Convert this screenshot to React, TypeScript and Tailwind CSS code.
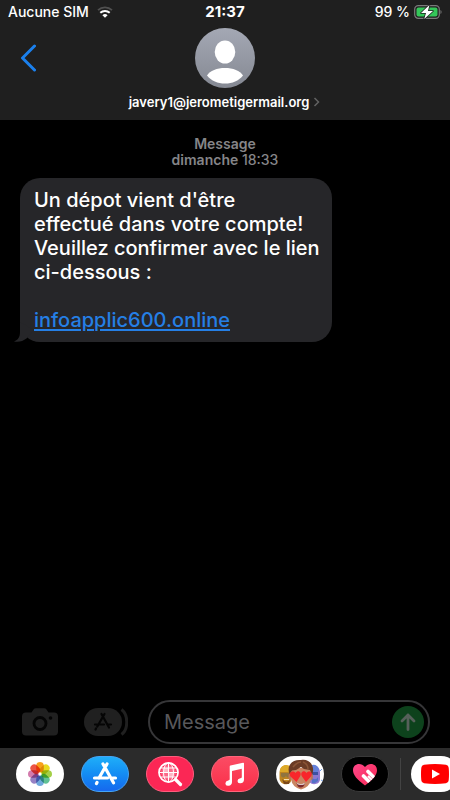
import type { ReactNode } from "react";

const WifiIcon = () => (
  <svg className="w-4 h-3" viewBox="0 0 16 12" fill="none" aria-hidden="true">
    <path d="M1 4.2a10.2 10.2 0 0 1 14 0" stroke="#505050" strokeWidth="1.8" />
    <path d="M3.3 6.7a7 7 0 0 1 9.4 0" stroke="#fff" strokeWidth="2" />
    <path d="M8 11.8 5.4 9.2a3.8 3.8 0 0 1 5.2 0Z" fill="#fff" />
  </svg>
);

const BatteryIcon = () => (
  <svg className="w-7 h-4" viewBox="0 0 28 16" fill="none" aria-hidden="true">
    <rect x="0.7" y="1.7" width="24.6" height="12.6" rx="3.6" stroke="#7b7b7b" strokeWidth="1.2" />
    <rect x="2.5" y="3.5" width="21" height="9" rx="2" fill="#34c759" />
    <path d="M26.5 6v4c1.4-.6 1.4-3.4 0-4Z" fill="#7b7b7b" />
    <path
      d="M15.4 1 7 9h5l-1.8 6L19 7h-5Z"
      fill="#fff"
      stroke="#1f1f1f"
      strokeWidth="1.6"
      paintOrder="stroke"
      strokeLinejoin="round"
    />
  </svg>
);

const Avatar = () => (
  <svg className="w-15 h-15" viewBox="0 0 60 60" aria-hidden="true">
    <defs>
      <linearGradient id="avatar" x1="0" y1="0" x2="0" y2="1">
        <stop offset="0" stopColor="#a4a8b4" />
        <stop offset="1" stopColor="#858993" />
      </linearGradient>
    </defs>
    <circle cx="30" cy="30" r="30" fill="url(#avatar)" />
    <ellipse cx="30" cy="24" rx="10.3" ry="11.5" fill="#fff" />
    <path d="M12 47.5C15 42.5 22 40 30 40s15 2.5 18 7.5C43.5 53 37.5 55.5 30 55.5S16.5 53 12 47.5Z" fill="#fff" />
  </svg>
);

const CameraIcon = () => (
  <svg className="w-9 h-7" viewBox="0 0 36 28" aria-hidden="true">
    <path
      d="M4 4.5h5.5l2-3Q12.3.3 14 .3h8q1.7 0 2.5 1.2l2 3H32q4 0 4 4v15q0 4-4 4H4q-4 0-4-4v-15q0-4 4-4Z"
      fill="#202020"
    />
    <circle cx="18" cy="15.5" r="6" fill="none" stroke="#050505" strokeWidth="2.8" />
    <circle cx="28.5" cy="10" r="1.8" fill="#050505" />
  </svg>
);

const StoreIcon = () => (
  <svg className="w-11 h-7" viewBox="0 0 44 28" fill="none" aria-hidden="true">
    <rect width="38" height="28" rx="14" fill="#202020" />
    <path d="M34.5 1c9 5 9 21 0 26" stroke="#000" strokeWidth="2.5" />
    <path d="M37.5 1.5c7 5 7 20 0 25" stroke="#202020" strokeWidth="3" />
    <path
      d="m20.5 6-7.2 12.5M17.5 6 25 19.500M11 16.500h9M24 16.500h3M12 20.500l-.5 1"
      stroke="#050505"
      strokeWidth="2.2"
      strokeLinecap="round"
    />
  </svg>
);

const petals = ["#f7a01b", "#e8d921", "#a3cf46", "#60c195", "#70a9dc", "#9681c4", "#d37bad", "#ed5545"];

const PhotosIcon = () => (
  <svg className="w-7 h-7" viewBox="-14 -14 28 28" aria-hidden="true">
    {petals.map((color, i) => (
      <rect
        key={color}
        className="mix-blend-multiply"
        x="-3.8"
        y="-12"
        width="7.6"
        height="10.5"
        rx="3.8"
        fill={color}
        transform={`rotate(${i * 45})`}
      />
    ))}
    <circle r="1.2" fill="#fff" />
  </svg>
);

const AppStoreIcon = () => (
  <svg className="w-7 h-7" viewBox="0 0 28 28" fill="none" stroke="#fff" strokeWidth="3.2" strokeLinecap="round" aria-hidden="true">
    <path d="M16 4 8 18M12 4l10.5 18.8M3.5 18h13M21.5 18h3M6 22.5l-.5 1" />
  </svg>
);

const ImageSearchIcon = () => (
  <svg className="w-7 h-7" viewBox="0 0 28 28" fill="none" stroke="#fff" aria-hidden="true">
    <circle cx="12.5" cy="12.5" r="9.5" strokeWidth="1.8" />
    <circle cx="12.5" cy="12.5" r="7.4" fill="#fff" fillOpacity=".3" stroke="none" />
    <path d="M8 8h4.500v4.500H8zM12.500 12.500H17V17h-4.500z" fill="#fff" fillOpacity=".5" stroke="none" />
    <path d="M12.500 3v19M3 12.500h19M5 8h15M5 17h15" />
    <ellipse cx="12.5" cy="12.5" rx="5" ry="9.5" />
    <path d="m19.500 19.500 5 5" strokeWidth="3.2" strokeLinecap="round" />
  </svg>
);

const MusicIcon = () => (
  <svg className="w-7 h-7" viewBox="0 0 28 28" aria-hidden="true">
    <path
      d="M9.5 5.500 22 2.800q1-.2 1 .8v15.900q0 3.500-3.700 3.800-2.800.2-2.800-2.200 0-2.200 2.700-2.800 1.600-.3 1.600-1.400V8.700L11 10.900v11q0 3.300-3.600 3.800-3 .3-3-2.300 0-2.200 2.800-2.800 1.500-.3 1.500-1.300V6.600q0-.9.800-1.100Z"
      fill="#fff"
    />
  </svg>
);

const MemojiIcon = () => (
  <svg className="w-12 h-9" viewBox="0 0 48 36" aria-hidden="true">
    {/* left friend */}
    <path d="M3.5 17c0-10 12-10 12 0v6c0 7-11 7-12 0Z" fill="#bd8421" />
    <path d="M4 14c1-6 10-7 12-1l-2 3H4Z" fill="#dda929" />
    <path d="M5 17h9v3q-2 3-4 0-3 3-5 0Z" fill="#8f7440" />
    <path d="M6 23q4 5 8 1l-1 4H8Z" fill="#7a4719" />
    <path d="M8 23.5h5" stroke="#f7ddae" strokeWidth="1" />
    {/* right friend */}
    <path d="M33 17c0-9 10-10 11-1v7c0 6-9 7-11 2Z" fill="#8d78cf" />
    <path d="M33 12c2-5 9-4 10 2l-2 2h-8Z" fill="#6480d8" />
    <path d="M35 16h7v3h-7Z" fill="#3d51a0" />
    <path d="M36 22q4 3 6-1v4l-3 2h-3Z" fill="#5270c7" />
    <path d="m44 15 2-2m-1 11 2 1" stroke="#719ce6" strokeWidth="1" />
    {/* front face */}
    <ellipse cx="14.5" cy="20.5" rx="2" ry="3.5" fill="#bc7557" />
    <ellipse cx="35" cy="20.5" rx="2" ry="3.5" fill="#bc7557" />
    <path d="M15 12h20v11q-1 8-10 10.5-9-2.5-10-10.5Z" fill="#c98562" />
    <path d="M13.5 18C10 9 17 3 25 4c8-2 15 6 11 15l-2-5-6-1-3-2-5 3-4 .5Z" fill="#6b3b25" />
    <path d="M17 11q4-5 8-5M27 6q5 2 5 7" fill="none" stroke="#8b5536" strokeWidth="1.5" />
    <path d="m20.5 26-6-5.5c-2.5-4 2.5-7 5-3.5 2.5-4 7-.5 4.5 3.5Z" fill="#f8262b" />
    <path d="m30 26-4-5.5c-2.5-4 2-7.500 4.500-3.500 3-3.500 7-.5 4.500 3.500Z" fill="#f8262b" />
    <path d="M20.5 27q4.500 2 8.500 0-1 4.500-4.500 4.500-3 0-4-4.500Z" fill="#79282c" />
    <path d="M21 27.100q4 2 7.500 0v1.200q-3.500 1-7 0Z" fill="#fff" />
  </svg>
);

const HeartIcon = () => (
  <svg className="w-7 h-7" viewBox="0 0 28 28" aria-hidden="true">
    <defs>
      <linearGradient id="heart" x1="0" y1="0" x2="1" y2="1">
        <stop offset="0" stopColor="#ff4c91" />
        <stop offset="1" stopColor="#f7244e" />
      </linearGradient>
      <clipPath id="heart-shape">
        <path d="M14 25.500C6 19.500 2 15 2 10.200 2 3.500 10 2 14 7c4-5 12-3.500 12 3.200 0 4.800-4 9.300-12 15.300Z" />
      </clipPath>
    </defs>
    <g clipPath="url(#heart-shape)">
      <rect width="28" height="28" fill="url(#heart)" />
      <path d="m12.500 16 9 9M17 11.500l9 9" stroke="#fff" strokeWidth="3.600" strokeLinecap="round" />
      <path d="m17 16 8 8" stroke="#fff" strokeWidth="2" />
    </g>
  </svg>
);

const YoutubeIcon = () => (
  <svg className="w-7 h-5" viewBox="0 0 28 20" aria-hidden="true">
    <path d="M3 .7q11-1.400 22 0 2.500.3 2.700 3 .6 6.300 0 12.600-.2 2.700-2.700 3-11 1.400-22 0-2.500-.3-2.700-3-.6-6.300 0-12.600Q.5 1 3 .7Z" fill="#f00" />
    <path d="m11 5.500 8 4.500-8 4.500Z" fill="#fff" />
  </svg>
);

type DrawerApp = {
  name: string;
  className: string;
  icon: ReactNode;
};

const apps: DrawerApp[] = [
  { name: "Photos", className: "bg-white", icon: <PhotosIcon /> },
  { name: "App Store", className: "bg-linear-to-b from-[#20aef8] to-[#1768ee] border border-[#45a4f5]", icon: <AppStoreIcon /> },
  { name: "Images", className: "bg-[#fb2755] border border-[#ff5c7d]", icon: <ImageSearchIcon /> },
  { name: "Musique", className: "bg-linear-to-b from-[#fb4b64] to-[#fa2c48] border border-[#ff657b]", icon: <MusicIcon /> },
  { name: "Memoji", className: "bg-white", icon: <MemojiIcon /> },
  { name: "Digital Touch", className: "bg-black border border-[#393939]", icon: <HeartIcon /> },
];

const Header = () => (
  <header className="bg-[#1f1f1f] pb-2">
    <div className="grid grid-cols-3 items-center h-6 px-2 text-sm font-medium">
      <div className="flex items-center gap-2 whitespace-nowrap">
        <span>Aucune SIM</span>
        <WifiIcon />
      </div>
      <span className="text-center text-[15px] font-bold">21:37</span>
      <div className="flex items-center justify-end gap-1">
        <span>99 %</span>
        <BatteryIcon />
      </div>
    </div>
    <div className="grid grid-cols-3 pt-1">
      <button aria-label="Retour" className="justify-self-start self-center pl-5">
        <svg className="w-4 h-7" viewBox="0 0 16 28" fill="none" aria-hidden="true">
          <path d="M14.5 2 2.5 14l12 12" stroke="#1b80ed" strokeWidth="3" strokeLinecap="round" strokeLinejoin="round" />
        </svg>
      </button>
      <div className="flex justify-center">
        <Avatar />
      </div>
    </div>
    <button className="flex items-center gap-1 mx-auto mt-1 text-[13px] leading-5 font-semibold">
      javery1@jerometigermail.org
      <svg className="w-2 h-2.5" viewBox="0 0 8 10" fill="none" aria-hidden="true">
        <path d="m1.5 1 4 4-4 4" stroke="#626262" strokeWidth="1.5" />
      </svg>
    </button>
  </header>
);

const Conversation = () => (
  <main className="flex-1 pt-4 pl-5">
    <div className="text-center pr-5 text-sm leading-4 font-medium text-[#858588]">
      <p className="font-semibold">Message</p>
      <p>
        <span className="font-semibold">dimanche</span> 18:33
      </p>
    </div>
    <div className="relative w-fit mt-2.5 pl-3.5 pr-3 py-2.5 rounded-[20px] bg-[#262629] text-[20px] leading-6 font-medium">
      <svg className="absolute -left-1.5 bottom-0 w-6 h-5" viewBox="0 0 24 20" aria-hidden="true">
        <path d="M6 0v10c0 5-2 8-6 9.5 5 1 9-.5 12.5-3L20 8Z" fill="#262629" />
      </svg>
      <p className="relative">
        Un dépot vient d'être
        <br />
        effectué dans votre compte!
        <br />
        Veuillez confirmer avec le lien
        <br />
        ci-dessous :
      </p>
      <a href="#" className="relative block w-fit mt-6 text-[#257fe5] underline decoration-2 underline-offset-2">
        infoapplic600.online
      </a>
    </div>
  </main>
);

const Composer = () => (
  <div className="flex items-center px-5 pb-1">
    <button aria-label="Appareil photo" className="ml-0.5">
      <CameraIcon />
    </button>
    <button aria-label="Apps" className="ml-6.5">
      <StoreIcon />
    </button>
    <div className="flex flex-1 items-center min-w-0 h-11 ml-5 pl-3.5 pr-1 rounded-full border-2 border-[#363638]">
      <input
        type="text"
        aria-label="Message"
        placeholder="Message"
        className="flex-1 min-w-0 bg-transparent text-[20px] leading-6 outline-none placeholder:text-[#58585b]"
      />
      <button aria-label="Envoyer" className="flex items-center justify-center w-8 h-8 rounded-full bg-[#0d421c]">
        <svg className="w-5 h-5" viewBox="0 0 20 20" fill="none" aria-hidden="true">
          <path d="M10 17.5V3M4 9l6-6 6 6" stroke="#56605a" strokeWidth="2.8" strokeLinecap="round" strokeLinejoin="round" />
        </svg>
      </button>
    </div>
  </div>
);

const AppDrawer = () => (
  <nav className="flex items-center h-13 pl-4 overflow-hidden bg-[#2b2b2b]">
    <div className="flex shrink-0 gap-4">
      {apps.map((app) => (
        <button
          key={app.name}
          aria-label={app.name}
          className={`isolate flex items-center justify-center w-12 h-9 mr-px rounded-[18px] overflow-hidden ${app.className}`}
        >
          {app.icon}
        </button>
      ))}
    </div>
    <div className="shrink-0 w-px h-8 mx-2.5 bg-[#434343]" />
    <button aria-label="YouTube" className="shrink-0 flex items-center justify-center w-12 h-9 rounded-[18px] bg-white">
      <YoutubeIcon />
    </button>
  </nav>
);

export default function App() {
  return (
    <div className="flex flex-col min-h-screen bg-black text-white font-['Inter','Liberation_Sans',sans-serif]">
      <Header />
      <Conversation />
      <Composer />
      <AppDrawer />
    </div>
  );
}
